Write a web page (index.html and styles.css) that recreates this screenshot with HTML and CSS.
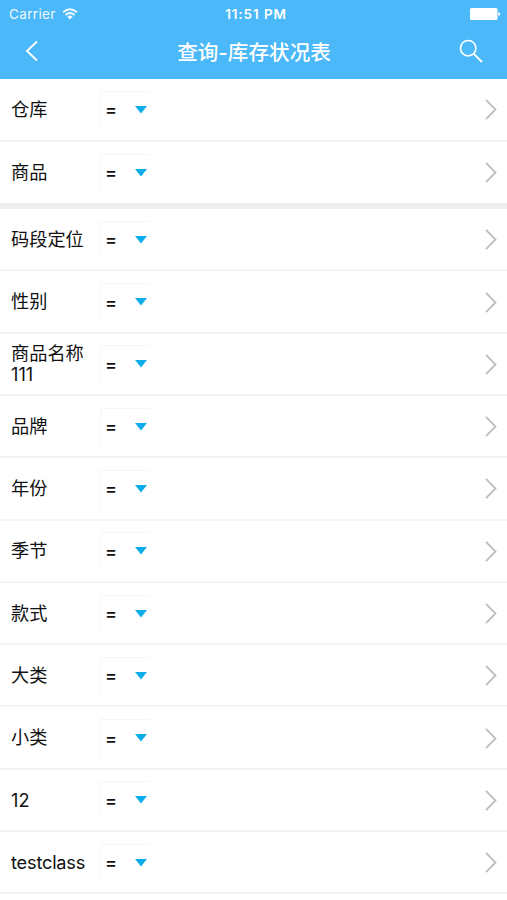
FILE: index.html
```html
<!DOCTYPE html>
<html lang="zh-CN">
<head>
<meta charset="utf-8">
<title>查询-库存状况表</title>
<link rel="stylesheet" href="styles.css">
</head>
<body>
<header class="header">
  <div class="status">
    <div class="carrier"><span>Carrier</span>
      <svg width="16" height="12" viewBox="0 0 16 12" fill="none" stroke="#fff" stroke-width="1.9"><path d="M1 4.2Q8-1.8 15 4.2M3.5 7Q8 3.2 12.5 7"/><path d="M5.3 8.7Q8 6.5 10.7 8.7L8 11.5z" fill="#fff" stroke="none"/></svg>
    </div>
    <span class="time">11:51 PM</span>
    <svg class="battery" width="31" height="12" viewBox="0 0 31 12" fill="#fff"><rect width="27.5" height="12" rx="1.5"/><path d="M28.3 4q2 .3 2 2t-2 2z"/></svg>
  </div>
  <nav class="nav">
    <svg class="back" width="14" height="22" viewBox="0 0 14 22" fill="none" stroke="#fff" stroke-width="1.9"><path d="M12 1.5 2 11 12 20.5"/></svg>
    <h1 class="title">查询-库存状况表</h1>
    <svg class="search" width="24" height="24" viewBox="0 0 24 24" fill="none" stroke="#fff" stroke-width="1.6"><circle cx="9.2" cy="9.2" r="7.7"/><path d="M14.8 14.8 23 23" stroke-width="1.9"/></svg>
  </nav>
</header>
<main id="list"></main>
<script src="rows.js"></script>
</body>
</html>
```
FILE: styles.css
```css
* { box-sizing: border-box; }
body {
  margin: 0;
  height: 900px;
  overflow: hidden;
  background: #fff;
  color: #111;
  font-family: Inter, "Noto Sans CJK SC", sans-serif;
}
svg { display: block; }
.header {
  height: 79px;
  background: #4ab8f9;
  color: #fff;
}
.status {
  display: grid;
  grid-template-columns: 1fr auto 1fr;
  align-items: center;
  height: 27px;
  padding: 0 6px 0 9px;
  font-size: 13.5px;
}
.carrier {
  display: flex;
  align-items: center;
  gap: 6px;
  letter-spacing: 0.35px;
  opacity: 0.92;
}
.time { padding-left: 2px; font-size: 13.5px; font-weight: 600; letter-spacing: 0.9px; }
.battery { justify-self: end; }
.nav {
  display: grid;
  grid-template-columns: 1fr auto 1fr;
  align-items: center;
  height: 48px;
  padding: 0 24px 0 25px;
}
.title {
  margin: 0;
  padding-top: 4px;
  font-size: 20.6px;
  font-weight: 500;
  line-height: 30px;
}
.search { justify-self: end; }
.row {
  display: grid;
  grid-template-columns: 89px 49px 1fr;
  align-items: center;
  height: 62.3px;
  padding: 1px 10px 0 11px;
  border-bottom: 2px solid #f4f4f4;
}
.row:first-child { height: 62.8px; }
.row.section-end {
  height: 67.3px;
  border-bottom: 6px solid #efefef;
}
.label {
  width: 80px;
  font-size: 18.2px;
  line-height: 21.5px;
}
.latin { letter-spacing: -0.2px; }
.operator {
  display: flex;
  align-items: center;
  justify-content: space-between;
  height: 38px;
  padding: 0 2px 1px 4px;
  border: solid #f6f6f6;
  border-width: 1px 0 0 1px;
}
.equals {
  padding-top: 1px;
  font-size: 18px;
  font-weight: 500;
  line-height: 20px;
}
.chevron { justify-self: end; }
```
FILE: rows.js
```javascript
const labels = ["仓库", "商品", "码段定位", "性别", "商品名称111", "品牌", "年份", "季节", "款式", "大类", "小类", "12", "testclass"];
document.getElementById("list").innerHTML = labels.map((label, i) => `
<div class="row${i === 1 ? " section-end" : ""}">
  <span class="label${/^[a-z]/.test(label) ? " latin" : ""}">${label.replace("111", "<br>111")}</span>
  <div class="operator">
    <span class="equals">=</span>
    <svg width="12" height="8" viewBox="0 0 12 8" fill="#0cace9"><path d="M0 0H12L6 7.5z"/></svg>
  </div>
  <svg class="chevron" width="12" height="21" viewBox="0 0 12 21" fill="none" stroke="#bdbdbd" stroke-width="1.8"><path d="M1 .8 10.5 10.5 1 20.2"/></svg>
</div>`).join("");
```
